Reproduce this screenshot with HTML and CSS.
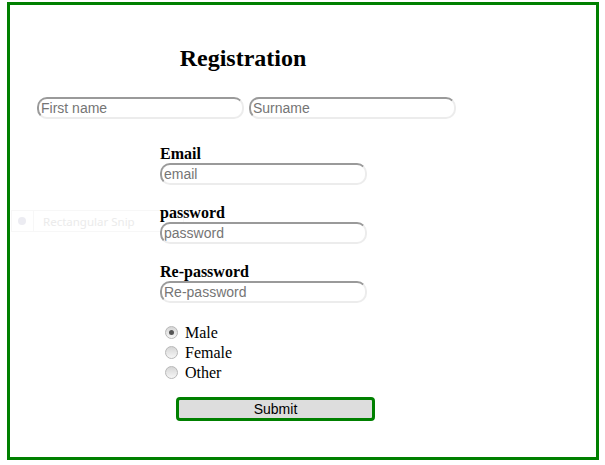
FILE: index.html
```html
<!DOCTYPE html>
<html>
<head>
<meta charset="utf-8">
<title>Registration</title>
<link rel="stylesheet" href="styles.css">
</head>
<body>
<div class="frame">
  <form class="reg">
    <h2 class="title">Registration</h2>
    <div class="names">
      <input class="field" type="text" placeholder="First name">
      <input class="field" type="text" placeholder="Surname">
    </div>
    <div class="fields">
      <label class="lbl">Email</label>
      <input class="field" type="text" placeholder="email">
      <label class="lbl gap">password</label>
      <input class="field" type="password" placeholder="password">
      <label class="lbl gap">Re-password</label>
      <input class="field" type="password" placeholder="Re-password">
      <div class="genders">
        <div class="opt"><input class="radio" type="radio" name="g" checked> Male</div>
        <div class="opt"><input class="radio" type="radio" name="g"> Female</div>
        <div class="opt"><input class="radio" type="radio" name="g"> Other</div>
      </div>
    </div>
    <div class="actions">
      <button class="submit" type="button">Submit</button>
    </div>
  </form>
  <div class="snip">
    <span class="snip-dot"></span>
    <span class="snip-sep"></span>
    <span class="snip-text">Rectangular Snip</span>
  </div>
</div>
</body>
</html>
```
FILE: styles.css
```css
html, body {
  margin: 0;
  padding: 0;
  background: #fff;
}
body {
  font-family: "Liberation Serif", "Times New Roman", serif;
  font-size: 16px;
  color: #000;
}
.frame {
  position: relative;
  z-index: 0;
  box-sizing: border-box;
  margin: 2px 6px 0 7px;
  width: 592px;
  height: 458px;
  border: 3px solid #008000;
  background: #fff;
}
.reg {
  padding-left: 27px;
  padding-top: 39px;
}
.title {
  width: 412px;
  margin: 0;
  text-align: center;
  font-size: 24px;
  font-weight: bold;
  line-height: 28px;
}
.names {
  display: flex;
  gap: 5px;
  margin-top: 25px;
}
.field {
  box-sizing: border-box;
  display: block;
  width: 207px;
  height: 22px;
  margin: 0;
  padding: 1px 2px;
  border-width: 2px;
  border-style: solid;
  border-color: #9a9a9a #ececec #ececec #9a9a9a;
  border-radius: 10px;
  font-family: "Liberation Sans", Arial, sans-serif;
  font-size: 14px;
  color: #000;
  background: #fff;
  outline: none;
}
.field::placeholder {
  color: #757575;
  opacity: 1;
}
.fields {
  margin-left: 123px;
  margin-top: 26px;
}
.lbl {
  display: block;
  font-weight: bold;
  font-size: 16px;
  line-height: 18px;
}
.lbl.gap {
  margin-top: 19px;
}
.genders {
  margin-top: 20px;
}
.opt {
  line-height: 20px;
  height: 20px;
  font-size: 16px;
}
.radio {
  appearance: none;
  -webkit-appearance: none;
  box-sizing: border-box;
  width: 13px;
  height: 13px;
  margin: 0 3px 0 5px;
  vertical-align: -1px;
  border: 1px solid #b8b8b8;
  border-radius: 50%;
  background: linear-gradient(#d6d6d6, #f6f6f6);
  position: relative;
}
.radio:checked::after {
  content: "";
  position: absolute;
  left: 3px;
  top: 3px;
  width: 5px;
  height: 5px;
  border-radius: 50%;
  background: #555;
}
.actions {
  margin-left: 139px;
  margin-top: 14px;
}
.submit {
  box-sizing: border-box;
  width: 199px;
  height: 24px;
  border: 3px solid #008000;
  border-radius: 4px;
  background: #dddddd;
  font-family: "Liberation Sans", Arial, sans-serif;
  font-size: 14px;
  color: #000;
  padding: 0;
}
.snip {
  position: absolute;
  z-index: -1;
  left: 1px;
  top: 205px;
  width: 171px;
  height: 20px;
  border: 1px solid #f7f7f7;
  display: flex;
  align-items: center;
  font-family: "Noto Sans", sans-serif;
  font-size: 11.5px;
  color: #ebebeb;
  pointer-events: none;
}
.snip-dot {
  width: 8px;
  height: 8px;
  border-radius: 50%;
  background: #ececf2;
  margin-left: 6px;
}
.snip-sep {
  width: 1px;
  height: 20px;
  background: #f7f7f7;
  margin-left: 7px;
}
.snip-text {
  margin-left: 9px;
  white-space: nowrap;
}
```
